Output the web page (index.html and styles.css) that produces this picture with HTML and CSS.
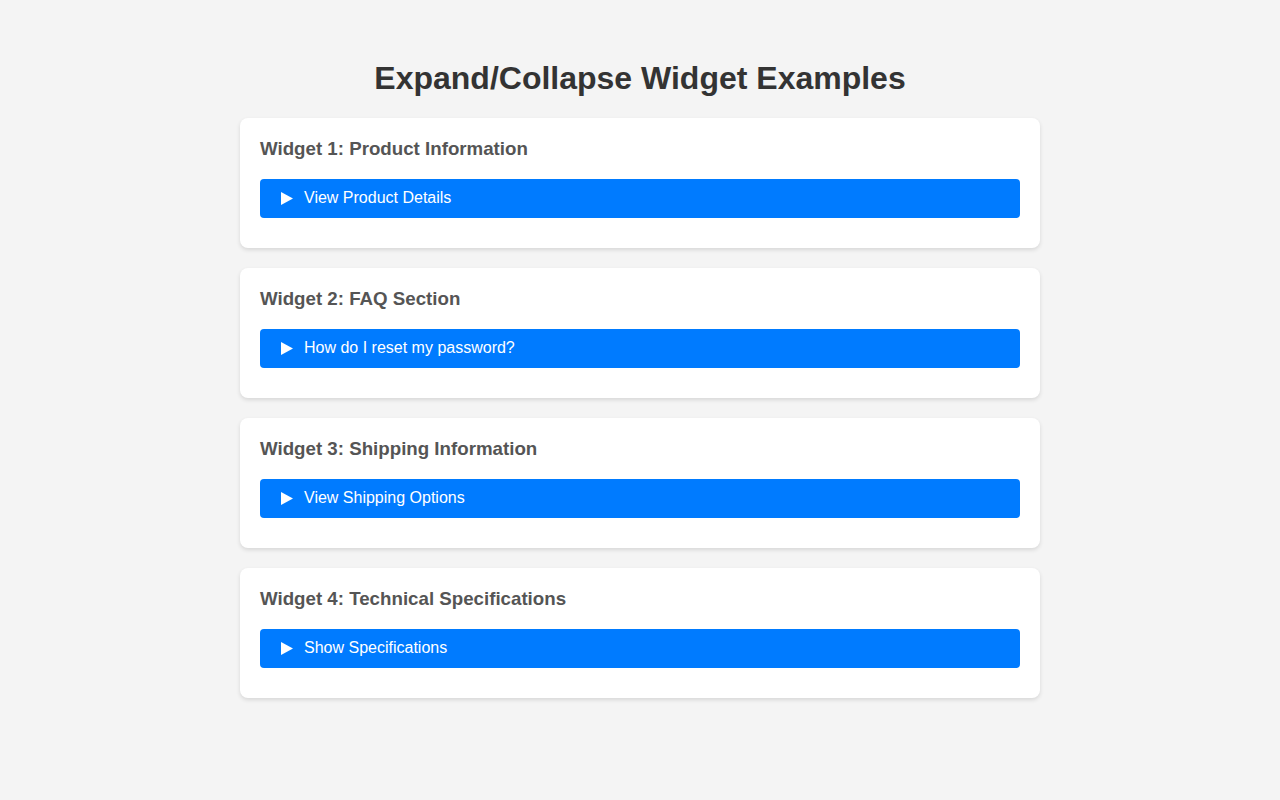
FILE: index.html
```html
<!DOCTYPE html>
<html lang="en">
<head>
<meta charset="utf-8">
<title>Expand/Collapse Widget Examples</title>
<link rel="stylesheet" href="styles.css">
</head>
<body>
<div class="container">
  <h1 class="title">Expand/Collapse Widget Examples</h1>
  <div class="card">
    <h3 class="card-title">Widget 1: Product Information</h3>
    <button class="toggle"><svg class="arrow" width="12" height="13" viewBox="0 0 12 13"><polygon points="0,0 12,6.5 0,13" fill="#fff"/></svg><span>View Product Details</span></button>
  </div>
  <div class="card">
    <h3 class="card-title">Widget 2: FAQ Section</h3>
    <button class="toggle"><svg class="arrow" width="12" height="13" viewBox="0 0 12 13"><polygon points="0,0 12,6.5 0,13" fill="#fff"/></svg><span>How do I reset my password?</span></button>
  </div>
  <div class="card">
    <h3 class="card-title">Widget 3: Shipping Information</h3>
    <button class="toggle"><svg class="arrow" width="12" height="13" viewBox="0 0 12 13"><polygon points="0,0 12,6.5 0,13" fill="#fff"/></svg><span>View Shipping Options</span></button>
  </div>
  <div class="card">
    <h3 class="card-title">Widget 4: Technical Specifications</h3>
    <button class="toggle"><svg class="arrow" width="12" height="13" viewBox="0 0 12 13"><polygon points="0,0 12,6.5 0,13" fill="#fff"/></svg><span>Show Specifications</span></button>
  </div>
</div>
</body>
</html>
```
FILE: styles.css
```css
html, body {
  margin: 0;
  padding: 0;
  background: #f4f4f4;
  font-family: "Liberation Sans", Arial, sans-serif;
}
.container {
  width: 800px;
  margin: 0 auto;
  padding-top: 60.2px;
}
.title {
  margin: 0 0 21px;
  font-size: 32px;
  font-weight: bold;
  color: #333;
  text-align: center;
  line-height: 37px;
}
.card {
  background: #fff;
  border-radius: 8px;
  box-shadow: 0 2px 4px rgba(0,0,0,0.12);
  padding: 20px 20px 30.2px;
  margin-bottom: 20px;
}
.card-title {
  margin: 0 0 19.5px;
  font-size: 18.72px;
  font-weight: bold;
  color: #555;
  line-height: 21.5px;
}
.toggle {
  display: flex;
  align-items: center;
  width: 100%;
  padding: 10.2px 0 9.8px 21px;
  border: none;
  border-radius: 4px;
  background: #007bff;
  color: #fff;
  font-family: "Liberation Sans", Arial, sans-serif;
  font-size: 16px;
  line-height: 18.7px;
  text-align: left;
  cursor: pointer;
}
.arrow {
  flex: none;
  margin-right: 11px;
}
```
